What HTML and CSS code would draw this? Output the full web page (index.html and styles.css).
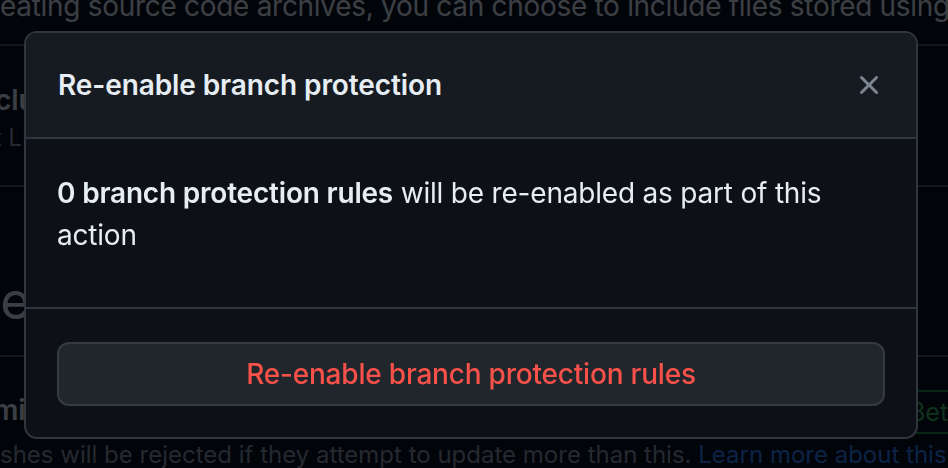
FILE: index.html
```html
<!DOCTYPE html>
<html lang="en">
<head>
<meta charset="utf-8">
<title>Re-enable branch protection</title>
<link rel="stylesheet" href="styles.css">
</head>
<body>
<div class="page">
  <p class="intro">eating source code archives, you can choose to include files stored using Git LFS in the archive.</p>
  <div class="row row-lfs">
    <div class="row-main">
      <div class="row-title">Include Git LFS objects in archives</div>
      <div class="row-desc">Git LFS usage in archives is billed at the same rate as usage with the client.</div>
    </div>
  </div>
  <div class="section">
    <h2 class="section-title">Pushes</h2>
  </div>
  <div class="row row-limit">
    <div class="row-main">
      <div class="row-title">Limit how many branches and tags can be updated in a single push</div>
    </div>
    <span class="beta">Beta</span>
  </div>
  <p class="limit-desc">shes will be rejected if they attempt to update more than this. <a class="link">Learn more about this setting</a></p>
</div>

<div class="backdrop"></div>

<div class="dialog" role="dialog" aria-labelledby="dlg-title">
  <div class="dialog-header">
    <h1 class="dialog-title" id="dlg-title">Re-enable branch protection</h1>
    <button class="close-btn" aria-label="Close">
      <svg viewBox="0 0 16 16" width="32" height="32" aria-hidden="true"><path d="M3.72 3.72a.75.75 0 0 1 1.06 0L8 6.94l3.22-3.22a.749.749 0 0 1 1.275.326.749.749 0 0 1-.215.734L9.06 8l3.22 3.22a.749.749 0 0 1-.326 1.275.749.749 0 0 1-.734-.215L8 9.06l-3.22 3.22a.751.751 0 0 1-1.042-.018.751.751 0 0 1-.018-1.042L6.94 8 3.72 4.78a.75.75 0 0 1 0-1.06Z"></path></svg>
    </button>
  </div>
  <div class="dialog-body">
    <p class="dialog-text"><strong>0 branch protection rules</strong> will be re-enabled as part of this action</p>
  </div>
  <div class="dialog-footer">
    <button class="danger-btn">Re-enable branch protection rules</button>
  </div>
</div>
</body>
</html>
```
FILE: styles.css
```css
* { box-sizing: border-box; }

html, body {
  margin: 0;
  padding: 0;
  width: 948px;
  height: 468px;
  overflow: hidden;
  background: #010409;
  font-family: Inter, "Noto Sans", sans-serif;
  color: #e6edf3;
}

.page {
  display: flex;
  flex-direction: column;
  margin-left: -30px;
  width: 1100px;
  white-space: nowrap;
  color: #9198a1;
}

.intro {
  margin: -14px 0 0 30px;
  font-size: 28px;
  line-height: 40px;
  padding-bottom: 18px;
  letter-spacing: -0.3px;
  color: #e6edf3;
  border-bottom: 2px solid #484f58;
}

.row {
  display: flex;
  align-items: center;
  border-bottom: 2px solid #484f58;
}

.row-lfs {
  padding: 34px 0 29px 0;
}

.row-title {
  font-size: 28px;
  font-weight: 600;
  line-height: 40px;
  color: #e6edf3;
}

.row-desc {
  font-size: 24px;
  line-height: 36px;
  color: #9198a1;
}

.section {
  padding: 84px 0 24px 0;
  border-bottom: 2px solid #484f58;
}

.section-title {
  margin: 0 0 0 -92px;
  font-size: 52px;
  font-weight: 400;
  line-height: 60px;
  color: #e6edf3;
}

.row-limit {
  border-bottom: none;
  padding: 33px 0 0 0;
  position: relative;
}

.beta {
  position: absolute;
  left: 925px;
  top: 33px;
  height: 44px;
  font-size: 25px;
  line-height: 40px;
  padding: 0 12px;
  color: #3fb950;
  border: 2px solid #238636;
  border-radius: 40px;
}

.limit-desc {
  margin: 7px 0 0 30px;
  font-size: 24px;
  line-height: 36px;
  color: #9198a1;
}

.link { color: #2f81f7; }

.backdrop {
  position: fixed;
  inset: 0;
  background: rgba(1, 4, 9, 0.75);
}

.dialog {
  position: fixed;
  left: 24px;
  top: 31px;
  width: 894px;
  height: 408px;
  display: flex;
  flex-direction: column;
  background: #0d1117;
  border: 2px solid #30363d;
  border-radius: 13px;
  overflow: hidden;
}

.dialog-header {
  display: flex;
  align-items: center;
  justify-content: space-between;
  height: 106px;
  padding: 0 31px 0 32px;
  background: #161b22;
  border-bottom: 2px solid #30363d;
}

.dialog-title {
  margin: 0;
  font-size: 28px;
  font-weight: 600;
  line-height: 40px;
  letter-spacing: -0.1px;
  color: #e6edf3;
}

.close-btn {
  display: flex;
  align-items: center;
  justify-content: center;
  width: 32px;
  height: 32px;
  padding: 0;
  border: none;
  background: none;
  fill: #7d8590;
}

.dialog-body {
  flex: 1;
  padding: 33px 32px 0 31px;
  border-bottom: 2px solid #30363d;
}

.dialog-text {
  margin: 0;
  font-size: 28px;
  line-height: 42px;
  letter-spacing: -0.2px;
  color: #e6edf3;
}

.dialog-text strong { font-weight: 600; }

.dialog-footer {
  padding: 33px 31px 31px 31px;
}

.danger-btn {
  display: block;
  width: 100%;
  height: 64px;
  background: #21262d;
  border: 2px solid #363b42;
  border-radius: 12px;
  font-family: Inter, "Noto Sans", sans-serif;
  font-size: 28px;
  font-weight: 500;
  letter-spacing: -0.2px;
  color: #f85149;
}
```
